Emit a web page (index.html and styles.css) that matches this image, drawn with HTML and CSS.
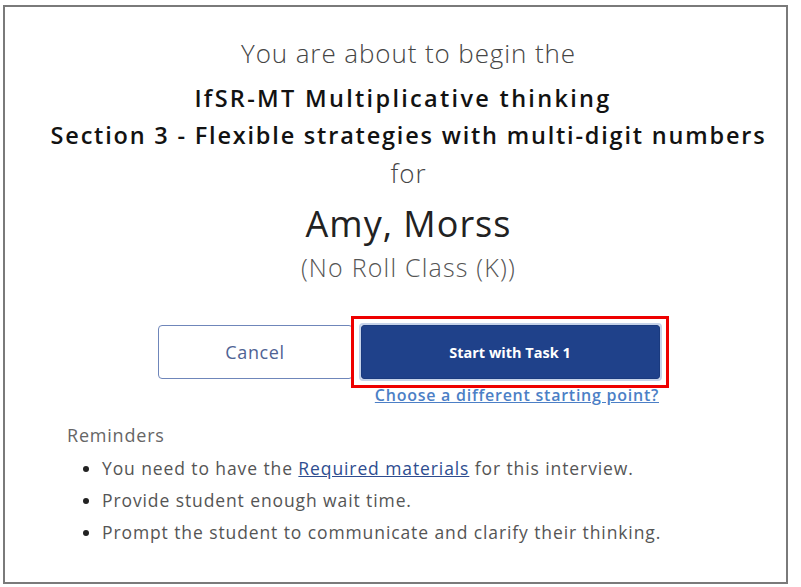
FILE: index.html
```html
<!DOCTYPE html>
<html lang="en">
<head>
<meta charset="utf-8">
<title>Begin interview</title>
<link rel="stylesheet" href="styles.css">
</head>
<body>
<div class="frame">
  <div class="content">
    <div class="intro">You are about to begin the</div>
    <div class="title first">IfSR-MT Multiplicative thinking</div>
    <div class="title">Section 3 - Flexible strategies with multi-digit numbers</div>
    <div class="intro for">for</div>
    <div class="name">Amy, Morss</div>
    <div class="klass">(No Roll Class (K))</div>
    <div class="actions">
      <button class="btn btn-cancel">Cancel</button>
      <div class="focus-box">
        <div class="focus-ring">
          <button class="btn btn-start">Start with Task 1</button>
        </div>
      </div>
    </div>
    <div class="link-row"><a class="choose" href="#">Choose a different starting point?</a></div>
  </div>
  <div class="reminders">
    <div class="rem-title">Reminders</div>
    <ul class="rem-list">
      <li>You need to have the <a href="#" class="req">Required materials</a> for this interview.</li>
      <li>Provide student enough wait time.</li>
      <li>Prompt the student to communicate and clarify their thinking.</li>
    </ul>
  </div>
</div>
</body>
</html>
```
FILE: styles.css
```css
html, body {
  margin: 0;
  padding: 0;
  background: #ffffff;
}
body {
  font-family: "Open Sans", "Liberation Sans", sans-serif;
  color: #333;
}
.frame {
  box-sizing: border-box;
  margin: 5px 0 0 3px;
  width: 785px;
  height: 579px;
  border: 2px solid #7a7a7a;
  background: #fff;
}
.content {
  padding: 28px 0 0 26px;
  text-align: center;
}
.intro {
  font-size: 26px;
  font-weight: 300;
  color: #454545;
  line-height: 36px;
  letter-spacing: 0.9px;
}
.title {
  font-size: 23.5px;
  font-weight: 600;
  color: #121212;
  line-height: 37px;
  letter-spacing: 1.8px;
}
.title.first {
  margin-top: 9px;
  letter-spacing: 2.3px;
  padding-right: 11px;
}
.for {
  line-height: 40px;
  margin-top: -1px;
}
.name {
  font-size: 36px;
  font-weight: 400;
  color: #222;
  line-height: 50px;
  margin-top: 6px;
  letter-spacing: 1px;
}
.klass {
  font-size: 25px;
  font-weight: 300;
  color: #555;
  line-height: 38px;
  letter-spacing: 1.2px;
  margin-top: -1px;
}
.actions {
  display: flex;
  justify-content: center;
  align-items: center;
  padding-left: 9px;
  margin-top: 30px;
}
.btn {
  font-family: inherit;
  cursor: pointer;
  box-sizing: border-box;
  height: 54px;
  border-radius: 4px;
}
.btn-cancel {
  width: 195px;
  background: #fff;
  border: 1px solid #6f86ba;
  color: #4f6394;
  font-size: 18px;
  font-weight: 400;
  letter-spacing: 0.6px;
}
.focus-box {
  box-sizing: border-box;
  margin-left: -2px;
  border: 3px solid #ee0000;
  padding: 4px 4px 4px 5px;
}
.focus-ring {
  border: 2px solid #c6d3ea;
  border-radius: 4px;
  display: flex;
}
.btn-start {
  width: 299px;
  height: 54px;
  background: #1f418a;
  border: 1px solid #1a3a7e;
  color: #fff;
  font-size: 14.5px;
  font-weight: 700;
  border-radius: 3px;
}
.link-row {
  display: flex;
  justify-content: flex-end;
  width: 628px;
  margin-top: -4px;
}
.choose {
  font-size: 16px;
  font-weight: 600;
  color: #4c7fc6;
  text-decoration: underline;
  line-height: 22px;
  letter-spacing: 0.75px;
}
.reminders {
  padding: 17px 0 0 62px;
}
.rem-title {
  font-size: 18px;
  font-weight: 500;
  color: #666;
  line-height: 24px;
  letter-spacing: 0.8px;
}
.rem-list {
  margin: 5px 0 0 0;
  padding: 0 0 0 35px;
  font-size: 17.5px;
  font-weight: 400;
  color: #555;
  letter-spacing: 0.9px;
}
.rem-list li {
  line-height: 32px;
}
.rem-list li::marker {
  color: #222;
}
.req {
  color: #2e4d90;
  text-decoration: underline;
}
```
